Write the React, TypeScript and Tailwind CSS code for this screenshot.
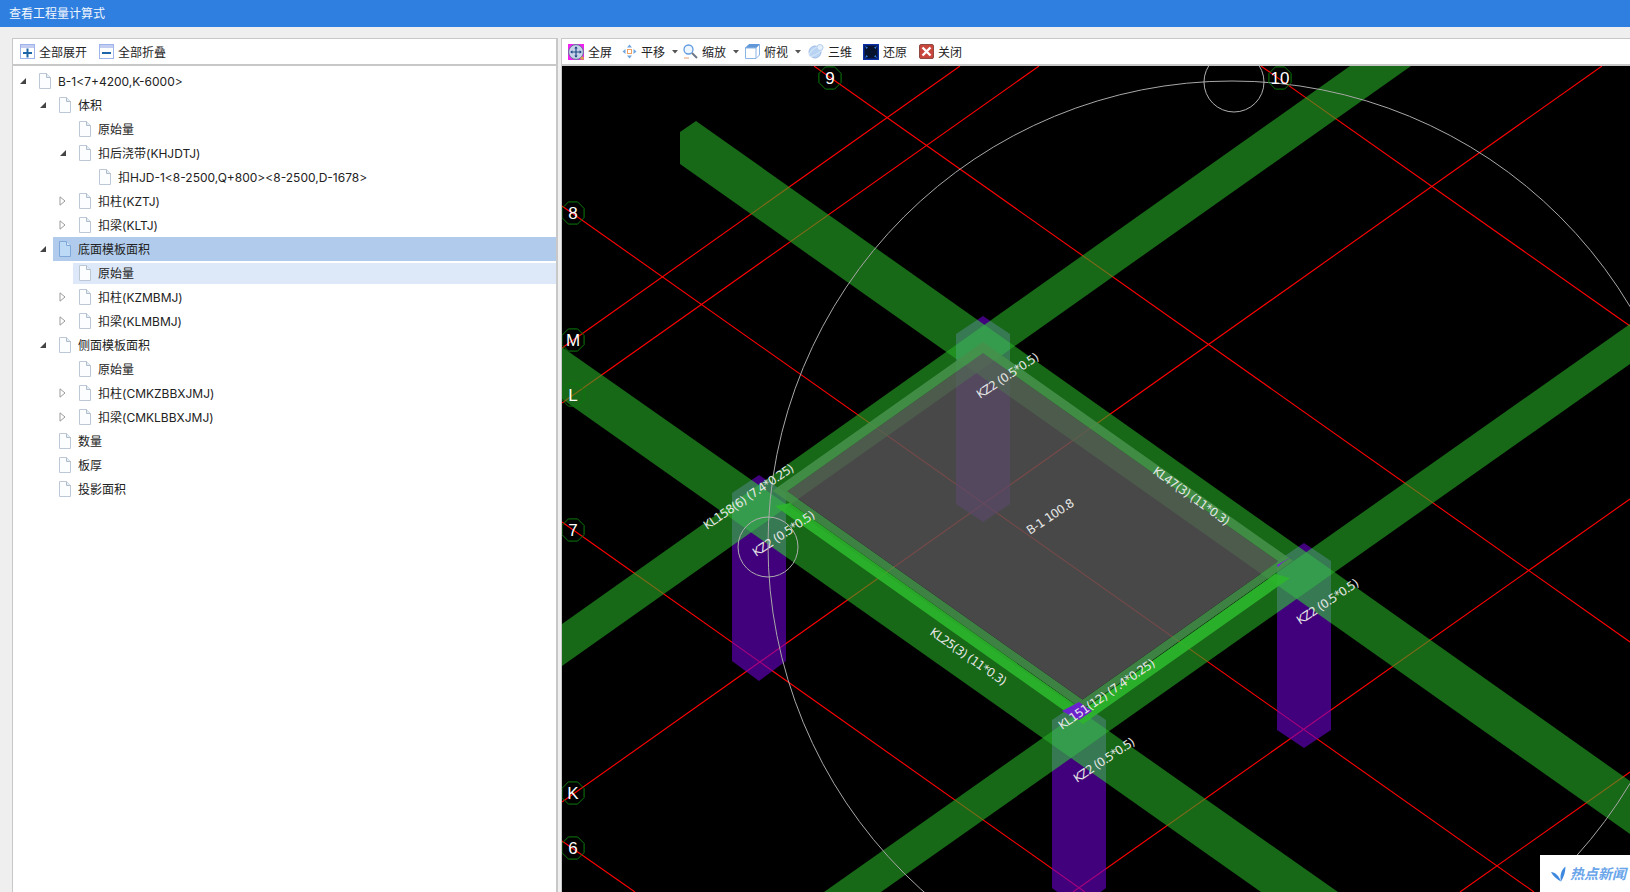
const cjk = "font-['Inter','Noto_Sans_CJK_SC',sans-serif]";

type TreeRow = { label: string; level: number; arrow?: "open" | "closed"; state?: "selected" | "hover" };

const treeRows: TreeRow[] = [
  { label: "B-1<7+4200,K-6000>", level: 0, arrow: "open" },
  { label: "体积", level: 1, arrow: "open" },
  { label: "原始量", level: 2 },
  { label: "扣后浇带(KHJDTJ)", level: 2, arrow: "open" },
  { label: "扣HJD-1<8-2500,Q+800><8-2500,D-1678>", level: 3 },
  { label: "扣柱(KZTJ)", level: 2, arrow: "closed" },
  { label: "扣梁(KLTJ)", level: 2, arrow: "closed" },
  { label: "底面模板面积", level: 1, arrow: "open", state: "selected" },
  { label: "原始量", level: 2, state: "hover" },
  { label: "扣柱(KZMBMJ)", level: 2, arrow: "closed" },
  { label: "扣梁(KLMBMJ)", level: 2, arrow: "closed" },
  { label: "侧面模板面积", level: 1, arrow: "open" },
  { label: "原始量", level: 2 },
  { label: "扣柱(CMKZBBXJMJ)", level: 2, arrow: "closed" },
  { label: "扣梁(CMKLBBXJMJ)", level: 2, arrow: "closed" },
  { label: "数量", level: 1 },
  { label: "板厚", level: 1 },
  { label: "投影面积", level: 1 },
];

const indent = ["pl-[6px]", "pl-[26px]", "pl-[46px]", "pl-[66px]"];

function DocIcon({ tint }: { tint?: boolean }) {
  return (
    <svg width="13" height="16" viewBox="0 0 13 16" className="shrink-0">
      <path d="M1.5 .5H8.5L12.5 4.5V15.5H1.5Z" fill={tint ? "#bcd9f5" : "#fcfdff"} stroke={tint ? "#7fa8d8" : "#bcc8d6"} />
      <path d="M8.5 .5V4.5H12.5" fill={tint ? "#d8e8f8" : "#e6edf5"} stroke={tint ? "#7fa8d8" : "#aebccb"} />
    </svg>
  );
}

function Arrow({ kind }: { kind?: "open" | "closed" }) {
  return (
    <span className="flex w-[14px] shrink-0 items-center">
      {kind === "open" && (
        <svg width="8" height="8" viewBox="0 0 8 8">
          <path d="M7 1V7H1Z" fill="#444" />
        </svg>
      )}
      {kind === "closed" && (
        <svg width="7" height="10" viewBox="0 0 7 10">
          <path d="M1 .8L6 5L1 9.2Z" fill="#fff" stroke="#9a9a9a" />
        </svg>
      )}
    </span>
  );
}

function Row({ row }: { row: TreeRow }) {
  return (
    <div className={`flex h-[24px] items-center ${indent[row.level]}`}>
      <Arrow kind={row.arrow} />
      <div
        className={`flex flex-1 items-center gap-[7px] pl-[5px] ${
          row.state === "selected"
            ? "h-[24px] bg-[#b0cbec]"
            : row.state === "hover"
              ? "h-[21px] bg-[#dde8f8]"
              : "h-[21px]"
        }`}
      >
        <DocIcon tint={row.state === "selected"} />
        <span className="whitespace-nowrap pt-[2px]">{row.label}</span>
      </div>
    </div>
  );
}

function BoxIcon({ minus }: { minus?: boolean }) {
  return (
    <svg width="15" height="15" viewBox="0 0 15 15">
      <rect x=".5" y=".5" width="14" height="14" fill="#fff" stroke="#9db5ea" />
      <rect x="1" y="1" width="13" height="3" fill="#c3cdf2" />
      <rect x="3" y="8" width="9" height="2" fill="#1d66a8" />
      {!minus && <rect x="6.5" y="4.5" width="2" height="9" fill="#1d66a8" />}
    </svg>
  );
}

function FullIcon() {
  return (
    <svg width="16" height="16" viewBox="0 0 16 16">
      <rect width="16" height="16" fill="#f020f0" />
      <circle cx="8" cy="8" r="7.4" fill="#c5d2e8" stroke="#5f7396" />
      <path d="M8 3V13M3 8H13" stroke="#234a86" strokeWidth="1.2" />
      <path d="M8 2.2L6.3 4.4H9.7ZM8 13.8L6.3 11.6H9.7ZM2.2 8L4.4 6.3V9.7ZM13.8 8L11.6 6.3V9.7Z" fill="#234a86" />
      <circle cx="14.2" cy="14.2" r="1.8" fill="#d9a04a" />
    </svg>
  );
}

function PanIcon() {
  return (
    <svg width="15" height="15" viewBox="0 0 15 15">
      <rect x="5.5" y="5.5" width="4" height="4" fill="#fff" stroke="#f0a060" />
      <path d="M7.5 .5L10 3.5H5ZM7.5 14.5L10 11.5H5ZM.5 7.5L3.5 5V10ZM14.5 7.5L11.5 5V10Z" fill="#6fa6e0" />
    </svg>
  );
}

function ZoomIcon() {
  return (
    <svg width="15" height="16" viewBox="0 0 15 16">
      <circle cx="5.5" cy="5.5" r="4.5" fill="#eef6ff" stroke="#5f9be0" strokeWidth="1.3" />
      <path d="M9 9L14 14" stroke="#6d7785" strokeWidth="2" />
      <path d="M1 14H6" stroke="#e8a070" strokeWidth="1" />
    </svg>
  );
}

function CubeIcon() {
  return (
    <svg width="15" height="15" viewBox="0 0 15 15">
      <path d="M.5 4L4 .5H14.5L11 4Z" fill="#5f97d8" stroke="#5f97d8" />
      <path d="M.5 4H11V14.5H.5ZM11 4L14.5 .5V11L11 14.5" fill="#fff" stroke="#8ab4e4" />
    </svg>
  );
}

function PlanetIcon() {
  return (
    <svg width="16" height="15" viewBox="0 0 16 15">
      <circle cx="7" cy="8" r="6" fill="#b9d3f2" stroke="#9cbde6" />
      <ellipse cx="8" cy="7" rx="8" ry="3" fill="none" stroke="#d5e5f8" transform="rotate(-35 8 7)" />
      <circle cx="12" cy="3.5" r="3" fill="#e6f0fb" stroke="#b5cfee" />
    </svg>
  );
}

function RestoreIcon() {
  return (
    <svg width="16" height="16" viewBox="0 0 16 16">
      <rect width="16" height="16" fill="#0a2fa8" />
      <rect x="1.5" y="1.5" width="13" height="13" fill="#06122e" />
      <path d="M2 2L5 3.5L3.5 5ZM14 2L11 3.5L12.5 5ZM2 14L5 12.5L3.5 11ZM14 14L11 12.5L12.5 11Z" fill="#2f7be0" />
    </svg>
  );
}

function CloseIcon() {
  return (
    <svg width="15" height="15" viewBox="0 0 15 15">
      <rect x=".5" y=".5" width="14" height="14" rx="1.5" fill="#c8463c" stroke="#8f4a44" />
      <path d="M3.5 3.5L11.5 11.5M11.5 3.5L3.5 11.5" stroke="#fff" strokeWidth="2.4" />
    </svg>
  );
}

function Caret() {
  return (
    <svg width="6" height="4" viewBox="0 0 6 4" className="ml-[3px]">
      <path d="M0 0H6L3 3.5Z" fill="#555" />
    </svg>
  );
}

function ToolBtn({ icon, label, caret, className }: { icon: React.ReactNode; label: string; caret?: boolean; className?: string }) {
  return (
    <div className={`flex items-center gap-[4px] ${className ?? ""}`}>
      {icon}
      <span className="pt-[2px]">{label}</span>
      {caret && <Caret />}
    </div>
  );
}

const k = 0.706;

// plan outline of the slab: apex y at x=983, front edges fixed by where they cross x=1069 and x=1290
function diamond(ty: number, fy: number, gy: number) {
  const lx = (ty + k * 983 - fy + k * 1069) / (2 * k);
  const ly = fy + k * (lx - 1069);
  const rx = (gy + k * 1290 - ty + k * 983) / (2 * k);
  const ry = ty + k * (rx - 983);
  const bx = (gy + k * 1290 - fy + k * 1069) / (2 * k);
  const by = fy + k * (bx - 1069);
  return `M983 ${ty}L${lx} ${ly}L${bx} ${by}L${rx} ${ry}Z`;
}

const redLines = [
  [814, 66, 1630, 642],
  [1261, 66, 1630, 326],
  [562, 206, 1534, 892],
  [562, 522, 1085, 892],
  [562, 841, 635, 892],
  [562, 348, 960, 66],
  [562, 403, 1039, 66],
  [562, 802, 1602, 66],
  [1073, 892, 1630, 499],
  [1460, 892, 1630, 772],
];

const beams = [
  "680,132 696,121 1630,781 1630,834 680,164",
  "562,347 1338,892 1261,892 562,399",
  "562,624 1350,66 1411,66 562,666",
  "824,892 1630,324 1630,364 881,892",
];

const columns = [
  { id: "colTop", cx: 983, tip: 316, s1: 334, s2: 504, end: 522 },
  { id: "colLeft", cx: 759, tip: 475, s1: 493, s2: 661, end: 681 },
  { id: "colRight", cx: 1304, tip: 543, s1: 561, s2: 730, end: 748 },
  { id: "colBottom", cx: 1079, tip: 702, s1: 720, s2: 888, end: 908 },
];

const hexagon = (c: (typeof columns)[number]) =>
  `${c.cx},${c.tip} ${c.cx + 27},${c.s1} ${c.cx + 27},${c.s2} ${c.cx},${c.end} ${c.cx - 27},${c.s2} ${c.cx - 27},${c.s1}`;

const axes = [
  { t: "9", x: 830, y: 78 },
  { t: "10", x: 1280, y: 78 },
  { t: "8", x: 573, y: 213 },
  { t: "M", x: 573, y: 340 },
  { t: "L", x: 573, y: 395 },
  { t: "7", x: 573, y: 530 },
  { t: "K", x: 573, y: 793 },
  { t: "6", x: 573, y: 848 },
];

const labels = [
  { t: "KZ2 (0.5*0.5)", a: [980, 399, 1040, 359] },
  { t: "KL158(6) (7.4*0.25)", a: [707, 530, 795, 470] },
  { t: "KZ2 (0.5*0.5)", a: [756, 557, 816, 517] },
  { t: "B-1 100.8", a: [1030, 535, 1075, 505] },
  { t: "KL47(3) (11*0.3)", a: [1152, 473, 1226, 526] },
  { t: "KL25(3) (11*0.3)", a: [929, 634, 1003, 686] },
  { t: "KL151(12) (7.4*0.25)", a: [1062, 730, 1156, 665] },
  { t: "KZ2 (0.5*0.5)", a: [1077, 783, 1136, 744] },
  { t: "KZ2 (0.5*0.5)", a: [1300, 625, 1360, 585] },
];

function octagon(x: number, y: number) {
  const pts = [];
  for (let i = 0; i < 8; i++) {
    const r = (Math.PI / 4) * i + Math.PI / 8;
    pts.push(`${x + 12 * Math.cos(r)},${y + 12 * Math.sin(r)}`);
  }
  return pts.join(" ");
}

function Model() {
  return (
    <svg width="1068" height="826" viewBox="562 66 1068 826" className="block">
      <defs>
        {columns.map((c) => (
          <clipPath key={c.id} id={c.id}>
            <polygon points={hexagon(c)} />
          </clipPath>
        ))}
      </defs>

      {redLines.map((l, i) => (
        <line key={i} x1={l[0]} y1={l[1]} x2={l[2]} y2={l[3]} stroke="#ff0000" strokeWidth="1.1" />
      ))}

      {columns.map((c) => (
        <polygon key={c.id} points={hexagon(c)} fill="rgb(108,0,207)" fillOpacity="0.6" />
      ))}

      {beams.map((p, i) => (
        <polygon key={i} points={p} fill="rgb(38,173,38)" fillOpacity="0.6" />
      ))}

      {/* beams seen through the column heads read lighter */}
      {columns.map((c) => (
        <g key={c.id} clipPath={`url(#${c.id})`}>
          {beams.map((p, i) => (
            <polygon key={i} points={p} fill="rgb(70,170,110)" fillOpacity="0.25" />
          ))}
        </g>
      ))}

      <path
        d={`${diamond(342, 700, 563)}${diamond(353, 690, 553)}`}
        fillRule="evenodd"
        fill="#45904a"
        fillOpacity="0.9"
      />
      <polygon points="775,506 1083,724 1290,578 1275,574 1083,710 790,503" fill="#2db52d" fillOpacity="0.92" />
      <path d={diamond(353, 690, 553)} fill="rgb(88,88,88)" fillOpacity="0.82" />

      <polygon points="1079,702 1092,711 1079,720 1062,711" fill="#6a22cc" />
      <polygon points="1277,565 1293,556 1282,563 1278,567" fill="#7a22dd" />

      <circle cx="1232" cy="545" r="464" fill="none" stroke="#a8a8a8" strokeWidth="1" />
      <circle cx="768" cy="547" r="30" fill="none" stroke="#b0b0b0" strokeWidth="1" />
      <circle cx="1234" cy="82" r="30" fill="none" stroke="#b0b0b0" strokeWidth="1" />

      {axes.map((a) => (
        <g key={a.t}>
          <polygon points={octagon(a.x, a.y)} fill="none" stroke="#0b7a0b" strokeWidth="1" />
          <text
            x={a.x}
            y={a.y + 6}
            textAnchor="middle"
            fill="#ffffff"
            fontSize="17"
            fontFamily="'Liberation Sans', sans-serif"
          >
            {a.t}
          </text>
        </g>
      ))}

      {labels.map((l, i) => {
        const [x1, y1, x2, y2] = l.a;
        const angle = (Math.atan2(y2 - y1, x2 - x1) * 180) / Math.PI;
        return (
          <text
            key={i}
            x={x1}
            y={y1}
            transform={`rotate(${angle} ${x1} ${y1})`}
            textLength={Math.hypot(x2 - x1, y2 - y1)}
            fill="#e6e6e6"
            fontSize="12"
            fontFamily="'DejaVu Sans', sans-serif"
          >
            {l.t}
          </text>
        );
      })}
    </svg>
  );
}

function Watermark() {
  return (
    <div className="absolute right-0 bottom-0 flex h-[37px] w-[90px] items-center gap-[4px] bg-white pl-[11px]">
      <svg width="15" height="16" viewBox="0 0 15 16" className="shrink-0">
        <path d="M0 6C4 6 8 10 10 15.5C6 13.5 2 10 0 6Z" fill="#3f88e0" />
        <path d="M14.5 .5C10.5 3.5 8.5 9 10 15.5C12.5 11.5 14.5 6.5 14.5 .5Z" fill="#3f88e0" />
      </svg>
      <span className="text-[14px] font-bold italic leading-none whitespace-nowrap text-[#6aa5ea]">热点新闻</span>
    </div>
  );
}

export default function App() {
  return (
    <div className={`flex h-screen flex-col overflow-hidden bg-[#efefef] text-[12px] text-[#222] ${cjk}`}>
      <div className="flex h-[27px] shrink-0 items-center bg-[#2e7fe0] pl-[9px] text-[#f2f7fd]">查看工程量计算式</div>

      <div className="flex min-h-0 flex-1 pt-[11px] pl-[12px]">
        <div className="flex w-[546px] shrink-0 flex-col border-t border-r-2 border-l border-[#c8c8c8] bg-white">
          <div className="flex h-[27px] shrink-0 items-center gap-[12px] border-b-2 border-[#c8c8c8] pl-[7px]">
            <ToolBtn icon={<BoxIcon />} label="全部展开" />
            <ToolBtn icon={<BoxIcon minus />} label="全部折叠" />
          </div>
          <div className="pt-[3px]">
            {treeRows.map((row, i) => (
              <Row key={i} row={row} />
            ))}
          </div>
        </div>

        <div className="ml-[3px] flex min-w-0 flex-1 flex-col border-t border-l border-[#c8c8c8] bg-white">
          <div className="flex h-[27px] shrink-0 items-center border-b-2 border-[#c8c8c8] pl-[6px]">
            <ToolBtn icon={<FullIcon />} label="全屏" className="mr-[10px]" />
            <ToolBtn icon={<PanIcon />} label="平移" caret className="mr-[5px]" />
            <ToolBtn icon={<ZoomIcon />} label="缩放" caret className="mr-[6px]" />
            <ToolBtn icon={<CubeIcon />} label="俯视" caret className="mr-[7px]" />
            <ToolBtn icon={<PlanetIcon />} label="三维" className="mr-[11px]" />
            <ToolBtn icon={<RestoreIcon />} label="还原" className="mr-[12px]" />
            <ToolBtn icon={<CloseIcon />} label="关闭" />
          </div>
          <div className="relative min-h-0 flex-1 overflow-hidden bg-black">
            <Model />
            <Watermark />
          </div>
        </div>
      </div>
    </div>
  );
}
